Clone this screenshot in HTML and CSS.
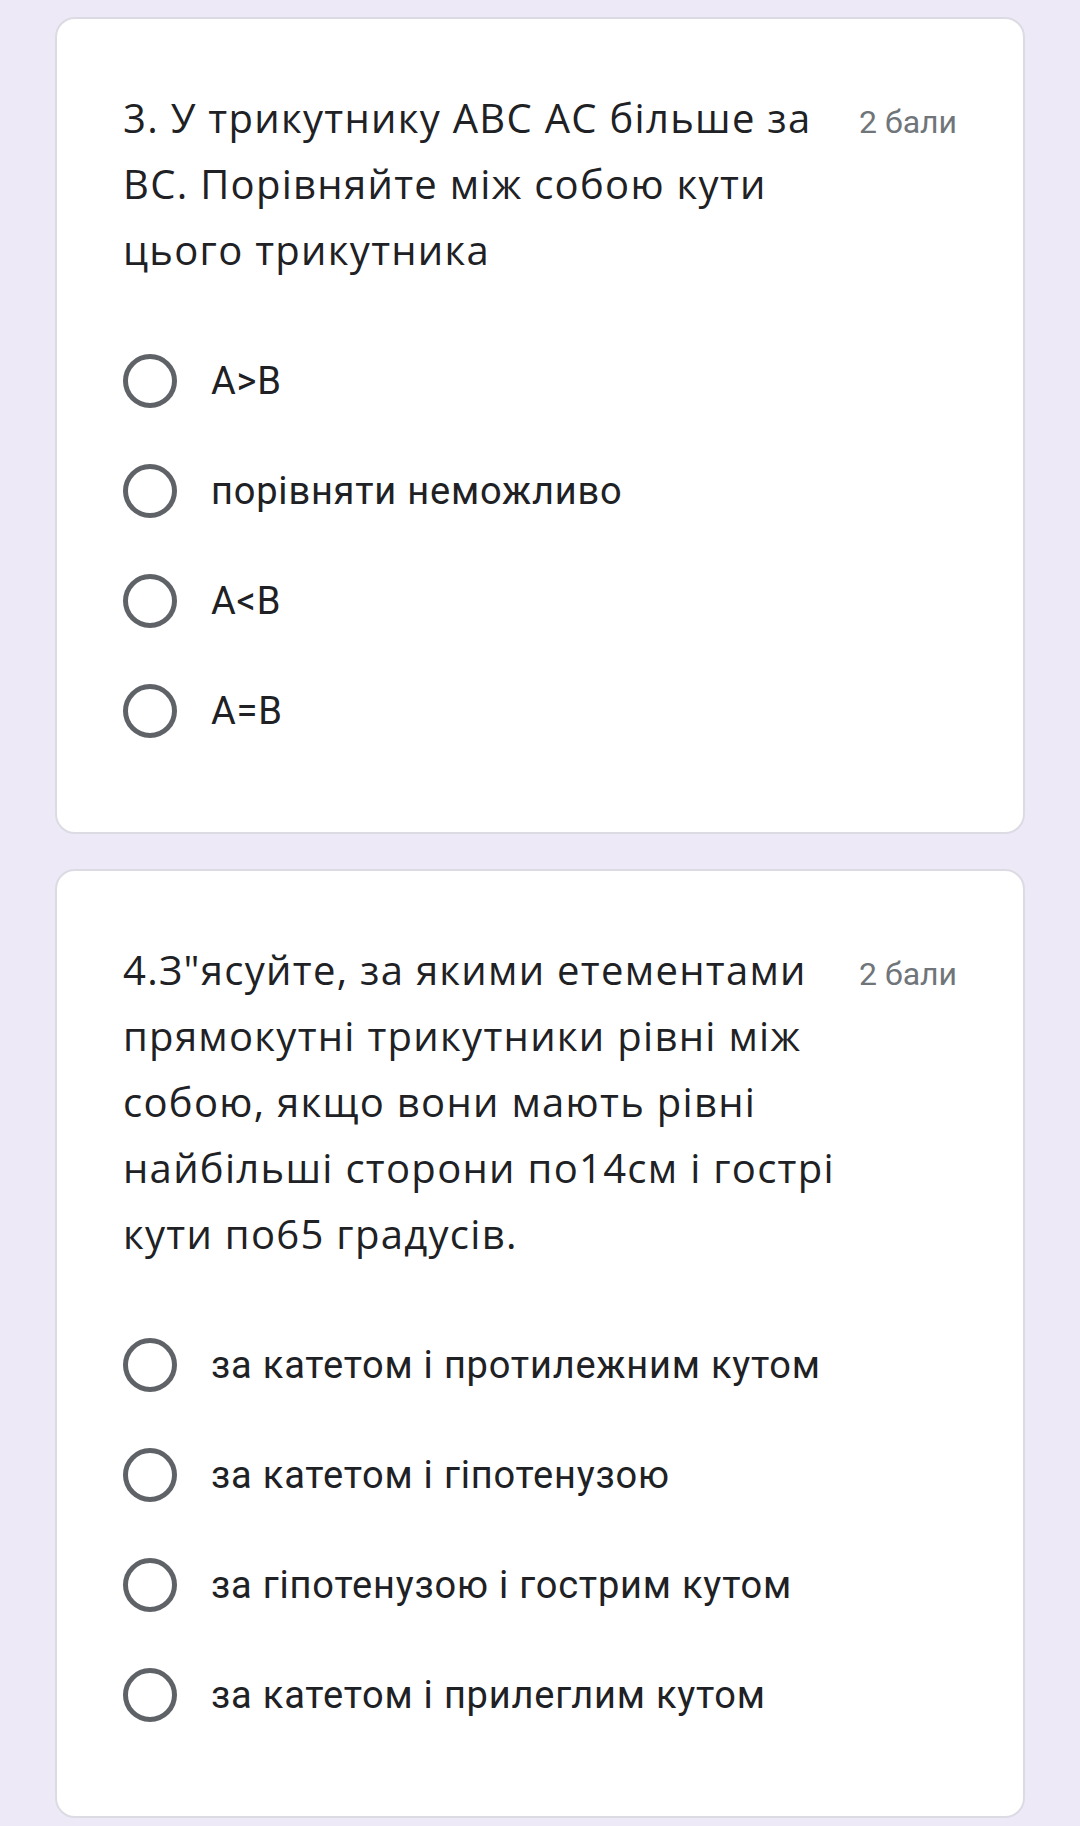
FILE: index.html
```html
<!DOCTYPE html>
<html lang="uk">
<head>
    <meta charset="UTF-8">
    <meta name="viewport" content="width=device-width, initial-scale=1.0">
    <title>Тест з геометрії</title>
    <link rel="stylesheet" href="styles.css">
</head>
<body>
    <div class="question-card">
        <div class="question-head">
            <div class="question-title">3. У трикутнику АВС АС більше за<br>ВС. Порівняйте між собою кути<br>цього трикутника</div>
            <div class="question-points">2 бали</div>
        </div>
        <div class="options">
            <label class="option"><span class="radio"></span><span class="option-text">A&gt;B</span></label>
            <label class="option"><span class="radio"></span><span class="option-text">порівняти неможливо</span></label>
            <label class="option"><span class="radio"></span><span class="option-text">A&lt;B</span></label>
            <label class="option"><span class="radio"></span><span class="option-text">A=B</span></label>
        </div>
    </div>

    <div class="question-card">
        <div class="question-head">
            <div class="question-title">4.З"ясуйте, за якими етементами<br>прямокутні трикутники рівні між<br>собою, якщо вони мають рівні<br>найбільші сторони по14см і гострі<br>кути по65 градусів.</div>
            <div class="question-points">2 бали</div>
        </div>
        <div class="options">
            <label class="option"><span class="radio"></span><span class="option-text">за катетом і протилежним кутом</span></label>
            <label class="option"><span class="radio"></span><span class="option-text">за катетом і гіпотенузою</span></label>
            <label class="option"><span class="radio"></span><span class="option-text">за гіпотенузою і гострим кутом</span></label>
            <label class="option"><span class="radio"></span><span class="option-text">за катетом і прилеглим кутом</span></label>
        </div>
    </div>
</body>
</html>
```

FILE: styles.css
```css
body {
    margin: 0;
    padding: 17px 55px;
    background-color: #ede9f7;
    font-family: Roboto, "Noto Sans", sans-serif;
    color: #202124;
    display: flex;
    flex-direction: column;
    gap: 35px;
}
.question-card {
    background-color: #fff;
    border: 2px solid #dcdbe3;
    border-radius: 20px;
    padding: 66px;
}
.question-head {
    display: flex;
    align-items: baseline;
}
.question-title {
    flex: 1;
    min-width: 0;
    font-family: "Open Sans", sans-serif;
    font-size: 40px;
    line-height: 66px;
    white-space: nowrap;
    letter-spacing: 1.3px;
}
.question-points {
    flex-shrink: 0;
    font-size: 32px;
    color: #70757a;
    white-space: nowrap;
    margin-left: 30px;
}
.options {
    margin-top: 43px;
    display: flex;
    flex-direction: column;
}
.option {
    display: flex;
    align-items: center;
    height: 110px;
}
.radio {
    width: 44px;
    height: 44px;
    border: 5px solid #5f6368;
    border-radius: 50%;
    flex-shrink: 0;
    margin-right: 34px;
}
.option-text {
    font-size: 38px;
    letter-spacing: 0.8px;
}
```
